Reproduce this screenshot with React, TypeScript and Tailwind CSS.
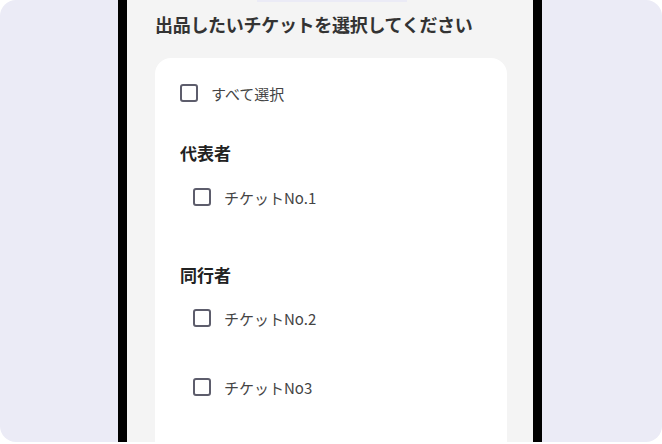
import React from 'react';

const font = { fontFamily: '"Noto Sans CJK JP", "Noto Sans", sans-serif' };

function Box() {
  return <span className="block h-[18px] w-[18px] shrink-0 rounded-[3px] border-2 border-[#5d5d6c] bg-white" />;
}

function CheckRow({ label, className = '' }: { label: string; className?: string }) {
  return (
    <label className={`flex h-[18px] items-center gap-[13px] ${className}`}>
      <Box />
      <span className="text-[15px] leading-none text-[#444]">{label}</span>
    </label>
  );
}

export default function App() {
  return (
    <div className="h-[444px] w-[662px] bg-white" style={font}>
      <div className="flex h-[442px] overflow-hidden rounded-[16px] bg-[#ebebf6] pl-[118px]">
        <div className="relative h-full w-[424px] border-x-[9px] border-black bg-[#f4f4f4] pl-[28px] pr-[26px]">
          <div className="absolute left-[130px] top-0 h-[2px] w-[150px] bg-[#ebebf6]" />
          <h1 className="pt-[12px] text-[18px] font-bold leading-[24px] tracking-[-0.3px] text-[#333]">
            出品したいチケットを選択してください
          </h1>
          <div className="mt-[22px] h-[400px] rounded-[16px] bg-white pl-[25px] pt-[26px]">
            <CheckRow label="すべて選択" />
            <h2 className="mt-[39px] text-[17px] font-bold leading-[24px] text-[#222]">代表者</h2>
            <CheckRow label="チケットNo.1" className="ml-[13px] mt-[23px]" />
            <h2 className="mt-[57px] text-[17px] font-bold leading-[24px] text-[#222]">同行者</h2>
            <CheckRow label="チケットNo.2" className="ml-[13px] mt-[22px]" />
            <CheckRow label="チケットNo3" className="ml-[13px] mt-[51px]" />
          </div>
        </div>
      </div>
    </div>
  );
}
